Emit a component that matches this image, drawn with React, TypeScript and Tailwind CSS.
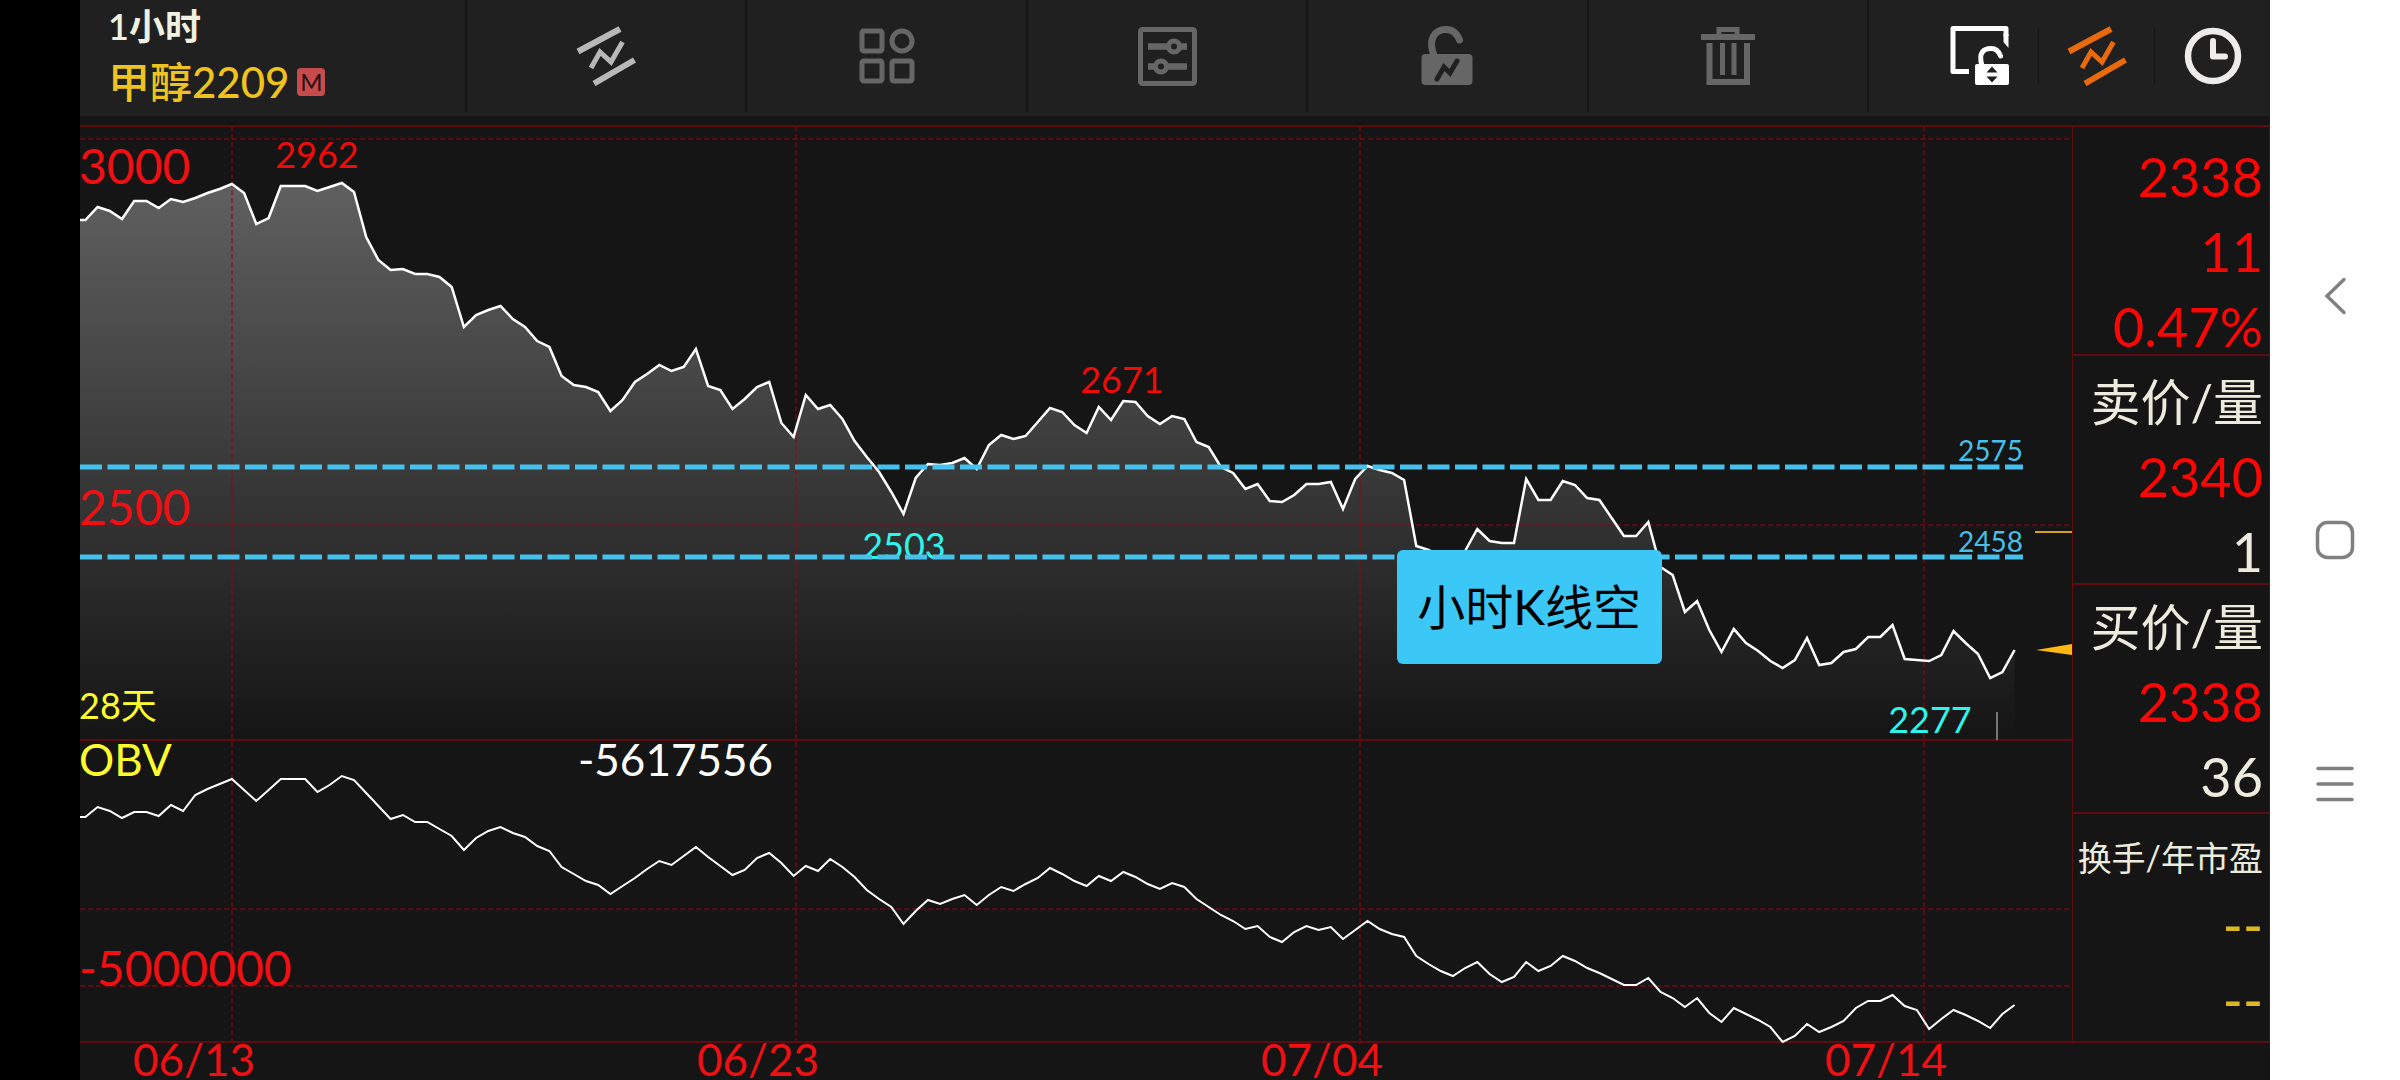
import React from "react";

const PRICE = [
    220, 207, 211, 219, 201, 201, 208, 199, 202, 198, 193, 189, 184, 193, 224, 218, 186, 186, 186, 191,
    187, 183, 192, 237, 260, 270, 269, 274, 274, 277, 287, 327, 315, 310, 306, 319, 327, 341, 347, 376,
    385, 387, 392, 411, 400, 382, 374, 365, 371, 367, 349, 386, 390, 409, 399, 387, 382, 423, 437, 395,
    409, 405, 419, 441, 457, 472, 492, 514, 478, 464, 465, 463, 458, 469, 445, 435, 439, 436, 422, 408,
    412, 425, 433, 407, 420, 401, 402, 416, 424, 416, 419, 442, 447, 467, 473, 489, 484, 501, 502, 495,
    484, 484, 482, 509, 479, 466, 470, 473, 480, 546, 550, 556, 560, 551, 529, 541, 543, 543, 479, 500,
    500, 481, 485, 498, 500, 518, 536, 536, 522, 567, 575, 612, 601, 630, 652, 629, 643, 651, 661, 668,
    660, 638, 665, 663, 652, 649, 637, 637, 625, 659, 660, 661, 655, 631, 643, 654, 678, 672, 650,
];

const OBV = [
    817, 807, 811, 818, 812, 812, 816, 805, 811, 795, 789, 784, 779, 790, 801, 790, 779, 779, 779, 792,
    785, 776, 780, 793, 806, 819, 815, 822, 822, 829, 836, 850, 838, 831, 827, 833, 837, 846, 851, 867,
    874, 881, 885, 894, 886, 878, 869, 861, 865, 856, 847, 857, 866, 875, 870, 858, 853, 863, 876, 866,
    871, 859, 867, 877, 890, 899, 907, 924, 911, 900, 904, 899, 895, 905, 895, 887, 891, 884, 878, 868,
    874, 881, 886, 876, 881, 872, 877, 884, 889, 883, 887, 899, 907, 915, 921, 929, 926, 937, 942, 932,
    926, 930, 927, 939, 930, 921, 929, 934, 937, 956, 964, 971, 976, 968, 962, 974, 982, 977, 962, 971,
    966, 956, 961, 968, 973, 979, 985, 985, 978, 992, 998, 1007, 998, 1013, 1022, 1008, 1014, 1020, 1027, 1042,
    1036, 1024, 1032, 1027, 1021, 1008, 1001, 1001, 995, 1006, 1010, 1029, 1019, 1010, 1015, 1021, 1028, 1014, 1005,
];

const FIRST_X = 85.4;
const STEP = 12.21;

const toPoints = (ys: number[]) =>
    [`80,${ys[0]}`, ...ys.map((y, i) => `${(FIRST_X + i * STEP).toFixed(1)},${y}`)].join(" ");

const LAST_X = FIRST_X + (PRICE.length - 1) * STEP;

const DATES = [
    { x: 232, label: "06/13" },
    { x: 796, label: "06/23" },
    { x: 1360, label: "07/04" },
    { x: 1924, label: "07/14" },
];

const TrendIcon = () => (
    <svg width="60" height="60" viewBox="0 0 60 60" fill="none" stroke="currentColor" strokeWidth="6">
        <path d="M2 25.500 44 3M18 57.500 58.500 34" />
        <path d="M15 42 24 26 35 36 46.500 16" strokeWidth="5" />
    </svg>
);

const GridIcon = () => (
    <svg width="56" height="56" viewBox="0 0 56 56" fill="none" stroke="currentColor" strokeWidth="5">
        <rect x="3" y="3" width="20" height="20" rx="2" />
        <circle cx="43" cy="13" r="10" />
        <rect x="3" y="33" width="20" height="20" rx="2" />
        <rect x="33" y="33" width="20" height="20" rx="2" />
    </svg>
);

const SettingsIcon = () => (
    <svg width="59" height="59" viewBox="0 0 59 59" fill="none" stroke="currentColor" strokeWidth="5">
        <rect x="2.500" y="2.500" width="54" height="54" rx="2" />
        <path d="M10 19.500H31M42 19.500H49M10 39.500H17M28 39.500H49" strokeWidth="6.500" />
        <circle cx="36" cy="19.500" r="5.500" />
        <circle cx="23" cy="39.500" r="5.500" />
    </svg>
);

const UnlockIcon = () => (
    <svg width="54" height="60" viewBox="0 0 54 60" fill="none">
        <rect x="1.500" y="28" width="51" height="31" rx="4" fill="currentColor" />
        <path d="M14.500 31C7 13 15 3.500 26 3.500c7 0 11 4 13.500 10.500" stroke="currentColor" strokeWidth="7" strokeLinecap="round" />
        <path d="M17 53 24 41 30 47 37 35" stroke="#202020" strokeWidth="5" strokeLinecap="round" />
    </svg>
);

const TrashIcon = () => (
    <svg width="54" height="60" viewBox="0 0 54 60" fill="none" stroke="currentColor">
        <path d="M18 9V3.500H36V9" strokeWidth="5" />
        <path d="M0 11H54" strokeWidth="6" />
        <path d="M8.500 17V56H46V17" strokeWidth="6" />
        <path d="M21.500 17V49M33 17V49" strokeWidth="5" />
    </svg>
);

const ScreenLockIcon = () => (
    <svg width="60" height="60" viewBox="0 0 60 60" fill="none">
        <path d="M19 45.500H3V2.500H56V10" stroke="currentColor" strokeWidth="5" strokeLinejoin="round" />
        <path d="M53.500 8H58.500V22L53.500 16Z" fill="currentColor" />
        <path d="M32 40C28 26 34 22.500 41 22.500c5 0 8 3 9.500 7.500" stroke="currentColor" strokeWidth="5" strokeLinecap="round" />
        <rect x="25" y="38" width="34" height="21" rx="2" fill="currentColor" />
        <path d="M42 40.500 47.500 46.500H36.500ZM42 56.500 47.500 50.500H36.500Z" fill="#202020" />
    </svg>
);

const ClockIcon = () => (
    <svg width="58" height="58" viewBox="0 0 58 58" fill="none" stroke="currentColor">
        <circle cx="29" cy="29" r="25" strokeWidth="6.500" />
        <path d="M29 14V29.500H41" strokeWidth="6" strokeLinecap="round" strokeLinejoin="round" />
    </svg>
);

const TOOLS = [
    { label: "画线", icon: <TrendIcon />, color: "text-[#b8b8b8]" },
    { label: "图形", icon: <GridIcon />, color: "text-[#666666]" },
    { label: "设置", icon: <SettingsIcon />, color: "text-[#666666]" },
    { label: "解锁", icon: <UnlockIcon />, color: "text-[#666666]" },
    { label: "删除", icon: <TrashIcon />, color: "text-[#666666]" },
];

const SHORTCUTS = [
    { label: "锁屏", icon: <ScreenLockIcon />, color: "text-white" },
    { label: "画线模式", icon: <TrendIcon />, color: "text-[#e86a0c] border-l border-[#141414]" },
    { label: "周期", icon: <ClockIcon />, color: "text-[#eeecea] border-l border-[#141414]" },
];

const Toolbar = () => (
    <header className="flex h-[116px] bg-[#202020] pb-1">
        <div className="flex w-[385px] shrink-0 flex-col gap-1 pl-7">
            <div className="text-[36px] leading-[52px] font-semibold text-[#f0f0e0]">1小时</div>
            <div className="flex items-center gap-2">
                <span className="text-[42px] leading-[52px] font-medium text-[#efc31f]">甲醇2209</span>
                <span className="flex size-7 items-center justify-center rounded-sm bg-[#c84b4b] text-2xl text-[#2a1010]">M</span>
            </div>
        </div>
        {TOOLS.map(({ label, icon, color }) => (
            <button key={label} aria-label={label} className={`flex flex-1 items-center justify-center border-l-2 border-[#151515] ${color}`}>
                {icon}
            </button>
        ))}
        <div className="flex w-[403px] shrink-0 items-center justify-end border-l-2 border-[#151515]">
            {SHORTCUTS.map(({ label, icon, color }) => (
                <button key={label} aria-label={label} className={`flex h-14 w-[116px] items-center justify-center ${color}`}>
                    {icon}
                </button>
            ))}
        </div>
    </header>
);

const Chart = () => (
    <div className="relative min-w-0 flex-1">
        <svg viewBox="80 116 1992 964" className="block h-auto w-full" role="img" aria-label="甲醇2209 走势图">
            <defs>
                <linearGradient id="area" gradientUnits="userSpaceOnUse" x1="0" y1="183" x2="0" y2="740">
                    <stop offset="0" stopColor="#fff" stopOpacity="0.32" />
                    <stop offset="1" stopColor="#fff" stopOpacity="0" />
                </linearGradient>
            </defs>

            <polygon points={`80,740 ${toPoints(PRICE)} ${LAST_X},740`} fill="url(#area)" />

            {/* grid */}
            <g stroke="#8c0a10" strokeOpacity="0.55" strokeWidth="2" strokeDasharray="5 3">
                {[139, 525, 909, 986].map((y) => (
                    <path key={y} d={`M80 ${y}H2072`} />
                ))}
                {DATES.map(({ x }) => (
                    <path key={x} d={`M${x} 126V1042`} />
                ))}
            </g>
            <g stroke="#600b0f" strokeWidth="2">
                <path d="M80 126H2072M80 740H2072M80 1042H2072" />
            </g>

            <polyline points={toPoints(PRICE)} fill="none" stroke="#fff" strokeWidth="2.500" />
            <polyline points={toPoints(OBV)} fill="none" stroke="#fff" strokeWidth="2" />

            <g fontSize="36" textAnchor="middle">
                <g fill="#f00a0a">
                    <text x="317" y="168">2962</text>
                    <text x="1122" y="393">2671</text>
                </g>
                <g fill="#2cf5ec">
                    <text x="904" y="559">2503</text>
                    <text x="1930" y="733">2277</text>
                </g>
            </g>

            {/* support and resistance */}
            <path d="M80 467H2023M80 557H2023" stroke="#47c1ec" strokeWidth="5" strokeDasharray="22 5.500" />
            <g fill="#47bfe8" fontSize="28" textAnchor="end">
                <text x="2023" y="461">2575</text>
                <text x="2023" y="552">2458</text>
            </g>

            <path d="M2035 532H2072" stroke="#d6a11d" strokeWidth="2" />
            <path d="M2036 650 2072 644V655Z" fill="#ffb711" />
            <path d="M1997 712V740" stroke="#777" strokeWidth="2" />

            <g fill="#f00f12" fontSize="48">
                <text x="79" y="184">3000</text>
                <text x="79" y="525">2500</text>
                <text x="79" y="986">-5000000</text>
            </g>
            <g fill="#f00f12" fontSize="44">
                {DATES.map(({ x, label }) => (
                    <text key={label} x={x - 99} y="1076">{label}</text>
                ))}
            </g>
            <text x="79" y="719" fontSize="36" fill="#ffff2e">28天</text>
            <text x="79" y="776" fontSize="44" fill="#ffff2e">OBV</text>
            <text x="578" y="776" fontSize="44" fill="#fff">-5617556</text>
        </svg>
        <div className="absolute top-[45%] left-[66.1%] flex h-[114px] w-[265px] items-center justify-center rounded-md bg-[#3bc8f7] text-5xl whitespace-nowrap text-black">
            小时K线空
        </div>
    </div>
);

const QUOTES = [
    {
        pad: "pt-3",
        rows: [
            { text: "2338", style: "text-[54px] text-[#fb0505]" },
            { text: "11", style: "text-[54px] text-[#fb0505]" },
            { text: "0.47%", style: "text-[54px] text-[#fb0505]" },
        ],
    },
    {
        pad: "pt-2",
        rows: [
            { text: "卖价/量", style: "text-[50px] text-[#ecebdd]" },
            { text: "2340", style: "text-[54px] text-[#fb0505]" },
            { text: "1", style: "text-[54px] text-[#ecebdd]" },
        ],
    },
    {
        pad: "pt-1",
        rows: [
            { text: "买价/量", style: "text-[50px] text-[#ecebdd]" },
            { text: "2338", style: "text-[54px] text-[#fb0505]" },
            { text: "36", style: "text-[54px] text-[#ecebdd]" },
        ],
    },
    {
        pad: "pt-1.5",
        rows: [
            { text: "换手/年市盈", style: "text-[34px] text-[#ecebdd]" },
            { text: "--", style: "pb-4 text-[54px] font-medium text-[#dcb924]" },
            { text: "--", style: "pb-4 text-[54px] font-medium text-[#dcb924]" },
        ],
    },
];

const QuotePanel = () => (
    <aside className="mt-[9px] w-[198px] shrink-0">
        <div className="border-x border-t-2 border-[#600b0f]">
            {QUOTES.map(({ pad, rows }, i) => (
                <section key={i} className={`h-[229px] border-b-2 border-[#600b0f] pr-1.5 whitespace-nowrap ${pad}`}>
                    {rows.map(({ text, style }, j) => (
                        <div key={j} className={`flex h-[75px] items-center justify-end leading-none ${style}`}>{text}</div>
                    ))}
                </section>
            ))}
        </div>
    </aside>
);

const SystemNav = () => (
    <nav className="flex w-[130px] shrink-0 flex-col items-center justify-center gap-[196px] bg-white text-[#808080]">
        <button aria-label="返回" className="flex size-12 items-center justify-center">
            <svg width="40" height="40" viewBox="0 0 40 40" fill="none" stroke="currentColor" strokeWidth="3.500" strokeLinecap="round">
                <path d="M29 3.500 12 20 29 36.500" />
            </svg>
        </button>
        <button aria-label="主页" className="flex size-12 items-center justify-center">
            <svg width="40" height="40" viewBox="0 0 40 40" fill="none" stroke="currentColor" strokeWidth="3.500">
                <rect x="2.500" y="2.500" width="35" height="35" rx="10" />
            </svg>
        </button>
        <button aria-label="菜单" className="flex size-12 items-center justify-center">
            <svg width="40" height="40" viewBox="0 0 40 40" fill="none" stroke="currentColor" strokeWidth="3.500" strokeLinecap="round">
                <path d="M3 4.500H37M3 20H37M3 35.500H37" />
            </svg>
        </button>
    </nav>
);

const App: React.FunctionComponent = () => {
    return (
        <div className="flex min-h-screen bg-black font-[Lato,'Noto_Sans_CJK_SC',sans-serif]">
            <main className="ml-20 min-w-0 flex-1 bg-[#151515]">
                <Toolbar />
                <div className="flex">
                    <Chart />
                    <QuotePanel />
                </div>
            </main>
            <SystemNav />
        </div>
    );
};

export default App;
